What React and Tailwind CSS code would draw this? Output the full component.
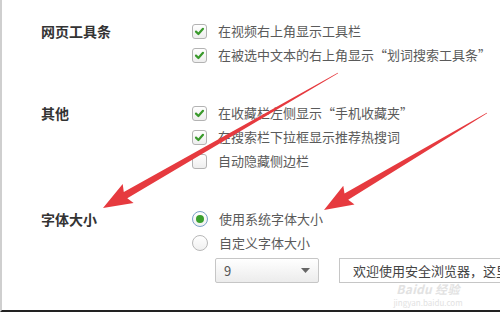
import React from 'react';

const font = { fontFamily: '"Noto Sans CJK SC", "Noto Sans", sans-serif' };

function Check({ on }) {
  return (
    <span className="w-[15px] h-[15px] shrink-0 rounded-[3px] border border-[#b3b3b3] bg-gradient-to-b from-white to-[#eeeeee] flex items-center justify-center">
      {on && (
        <svg width="11" height="11" viewBox="0 0 11 11">
          <path d="M2 5.6 L4.4 8 L9 2.8" fill="none" stroke="#3a9a2c" strokeWidth="2.2" strokeLinecap="round" strokeLinejoin="round" />
        </svg>
      )}
    </span>
  );
}

function Radio({ on }) {
  return (
    <span
      className={
        'w-[16px] h-[16px] shrink-0 rounded-full border flex items-center justify-center bg-gradient-to-b from-white to-[#f0f0f0] ' +
        (on ? 'border-[#7a9fc8]' : 'border-[#b8b8b8]')
      }
    >
      {on && <span className="w-[8px] h-[8px] rounded-full bg-[#3aa02e]" />}
    </span>
  );
}

function Row({ children, control }) {
  return (
    <div className="h-[24px] flex items-center gap-[11px]">
      {control}
      <span className="text-[13px] text-[#5a5a5a] whitespace-nowrap">{children}</span>
    </div>
  );
}

function Section({ label, children }) {
  return (
    <div className="flex mb-[34px]">
      <div className="w-[151px] shrink-0 h-[24px] flex items-center text-[14px] font-bold text-[#333]">{label}</div>
      <div className="flex flex-col shrink-0">{children}</div>
    </div>
  );
}

// tapered arrow polygon from tail to tip
function arrowPoints(tx, ty, hx, hy) {
  const len = Math.hypot(hx - tx, hy - ty);
  const dx = (hx - tx) / len;
  const dy = (hy - ty) / len;
  const nx = -dy;
  const ny = dx;
  const headLen = 26;
  const headW = 11;
  const shaftW = 3.6;
  const bx = hx - dx * headLen;
  const by = hy - dy * headLen;
  const p = (x, y) => `${x.toFixed(1)},${y.toFixed(1)}`;
  return [
    p(tx + nx * 0.4, ty + ny * 0.4),
    p(bx + nx * shaftW, by + ny * shaftW),
    p(bx + nx * headW - dx * 3, by + ny * headW - dy * 3),
    p(hx, hy),
    p(bx - nx * headW - dx * 3, by - ny * headW - dy * 3),
    p(bx - nx * shaftW, by - ny * shaftW),
    p(tx - nx * 0.4, ty - ny * 0.4),
  ].join(' ');
}

export default function App() {
  return (
    <div style={font} className="relative w-[500px] h-[312px] overflow-hidden bg-white border-l-2 border-l-[#cfcfcf] border-b-2 border-b-[#222]">
      <div className="pl-[39px] pt-[19px]">
        <Section label="网页工具条">
          <Row control={<Check on />}>在视频右上角显示工具栏</Row>
          <Row control={<Check on />}>在被选中文本的右上角显示“划词搜索工具条”</Row>
        </Section>
        <Section label="其他">
          <Row control={<Check on />}>在收藏栏左侧显示“手机收藏夹”</Row>
          <Row control={<Check on />}>在搜索栏下拉框显示推荐热搜词</Row>
          <Row control={<Check />}>自动隐藏侧边栏</Row>
        </Section>
        <Section label="字体大小">
          <Row control={<Radio on />}>使用系统字体大小</Row>
          <Row control={<Radio />}>自定义字体大小</Row>
          <div className="flex mt-[3px] ml-[23px] gap-[20px]">
            <div className="w-[104px] h-[25px] border border-[#c6c6c6] rounded-[2px] bg-gradient-to-b from-white to-[#ececec] flex items-center justify-between pl-[8px] pr-[8px]">
              <span className="text-[13px] text-[#555]">9</span>
              <svg width="9" height="5" viewBox="0 0 9 5">
                <path d="M0 0 L9 0 L4.5 5 Z" fill="#666" />
              </svg>
            </div>
            <div className="w-[240px] h-[25px] border border-[#c6c6c6] bg-white flex items-center pl-[13px]">
              <span className="text-[13px] text-[#444] whitespace-nowrap">欢迎使用安全浏览器，这里可以输入</span>
            </div>
          </div>
        </Section>
      </div>

      <div className="absolute left-[382px] top-[283px] w-[88px] flex flex-col items-center gap-[4px] text-[#e2e2e2] pointer-events-none">
        <span className="block h-[11px] leading-[11px] text-[12px] font-bold italic tracking-wide">Baidu 经验</span>
        <span className="block h-[9px] leading-[9px] text-[8px]">jingyan.baidu.com</span>
      </div>

      <svg className="absolute inset-0 pointer-events-none" width="500" height="312">
        <polygon points={arrowPoints(336, 73, 101, 208)} fill="#e63a3f" />
        <polygon points={arrowPoints(485, 113, 322, 210)} fill="#e63a3f" />
      </svg>
    </div>
  );
}
